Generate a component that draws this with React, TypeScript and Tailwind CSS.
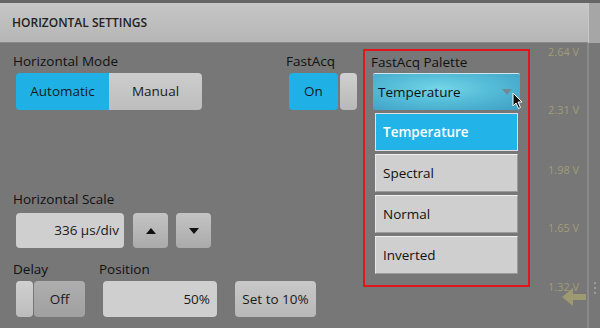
import React from "react";

const font = { fontFamily: '"Open Sans", "DejaVu Sans", sans-serif' };

function Btn({ children, className }: { children?: React.ReactNode; className: string }) {
  return (
    <div className={"flex items-center justify-center rounded-[4px] text-[13.5px] text-[#1a1a1a] " + className}>
      {children}
    </div>
  );
}

export default function App() {
  const volts = [
    { t: "2.64 V", y: 45 },
    { t: "2.31 V", y: 103 },
    { t: "1.98 V", y: 163 },
    { t: "1.65 V", y: 221 },
    { t: "1.32 V", y: 280 },
  ];
  return (
    <div className="relative w-[600px] h-[328px] overflow-hidden bg-[#777777]" style={font}>
      {/* title bar */}
      <div className="flex h-[43px] border-t-[3px] border-[#656565]">
        <div className="flex w-[588px] items-center border-b border-[#8a8a8a] bg-gradient-to-b from-[#c6c6c6] to-[#b6b6b6] pl-[12px] text-[12px] font-semibold text-[#222]">
          HORIZONTAL SETTINGS
        </div>
        <div className="flex-1 border-l border-[#c8c8c8] bg-[#a6a6a6]" />
      </div>

      <div className="flex h-[285px]">
        {/* left column */}
        <div className="w-[363px] pl-[13px] pt-[10px]">
          <div className="flex">
            <div className="w-[273px]">
              <div className="text-[13.5px] leading-[16px] text-[#111]">Horizontal Mode</div>
              <div className="ml-[3px] mt-[4px] flex h-[37px] w-[186px]">
                <Btn className="w-[93px] rounded-r-none bg-[#1fb1e6]">Automatic</Btn>
                <Btn className="w-[93px] rounded-l-none bg-gradient-to-b from-[#cdcdcd] to-[#bdbdbd]">Manual</Btn>
              </div>
            </div>
            <div>
              <div className="text-[13.5px] leading-[16px] text-[#111]">FastAcq</div>
              <div className="ml-[3px] mt-[4px] flex h-[37px] gap-[2px]">
                <Btn className="w-[49px] bg-[#1fb1e6]">On</Btn>
                <div className="w-[17px] rounded-[4px] bg-gradient-to-b from-[#d0d0d0] to-[#b8b8b8]" />
              </div>
            </div>
          </div>

          <div className="mt-[81px] text-[13.5px] leading-[16px] text-[#111]">Horizontal Scale</div>
          <div className="ml-[3px] mt-[6px] flex h-[35px]">
            <div className="flex w-[108px] items-center justify-end rounded-[4px] bg-[#cfcfcf] pr-[5px] text-[13.5px] text-[#1a1a1a]">
              336 μs/div
            </div>
            <Btn className="ml-[9px] w-[35px] bg-gradient-to-b from-[#c4c4c4] to-[#aaaaaa]">
              <svg width="10" height="6" viewBox="0 0 10 6"><path d="M0 6 L5 0 L10 6 Z" fill="#111" /></svg>
            </Btn>
            <Btn className="ml-[8px] w-[35px] bg-gradient-to-b from-[#c4c4c4] to-[#aaaaaa]">
              <svg width="10" height="6" viewBox="0 0 10 6"><path d="M0 0 L5 6 L10 0 Z" fill="#111" /></svg>
            </Btn>
          </div>

          <div className="mt-[13px] flex text-[13.5px] leading-[16px] text-[#111]">
            <div className="w-[86px]">Delay</div>
            <div>Position</div>
          </div>
          <div className="ml-[3px] mt-[4px] flex h-[36px]">
            <div className="w-[17px] rounded-[4px] bg-gradient-to-b from-[#d0d0d0] to-[#bcbcbc]" />
            <Btn className="ml-[1px] w-[51px] bg-gradient-to-b from-[#aeaeae] to-[#a0a0a0]">Off</Btn>
            <div className="ml-[18px] flex w-[114px] items-center justify-end rounded-[4px] bg-[#cfcfcf] pr-[7px] text-[13.5px] text-[#1a1a1a]">
              50%
            </div>
            <Btn className="ml-[18px] w-[81px] bg-gradient-to-b from-[#c8c8c8] to-[#b8b8b8]">Set to 10%</Btn>
          </div>
        </div>

        {/* palette box */}
        <div className="mt-[6px] h-[238px] w-[167px] border-2 border-[#e3141c] pt-[3px]">
          <div className="pl-[6px] text-[13.5px] leading-[16px] text-[#111]">FastAcq Palette</div>
          <div
            className="ml-[8px] mt-[3px] flex h-[37px] w-[147px] items-center justify-between rounded-[2px] border-t border-[#cde6ee] pl-[5px] pr-[8px] text-[13.5px] text-[#111]"
            style={{ background: "radial-gradient(ellipse at 45% 40%, #74d6e6 0%, #55bcd8 45%, #3d9fc4 100%)" }}
          >
            <span>Temperature</span>
            <svg width="10" height="6" viewBox="0 0 10 6"><path d="M0 0 L5 6 L10 0 Z" fill="#6f8a94" /></svg>
          </div>
          <div className="ml-[10px] mt-[3px] flex w-[143px] flex-col gap-[3px]">
            <div className="flex h-[38px] items-center border border-[#e0e0e0] bg-[#22b3e9] pl-[7px] text-[13.5px] font-semibold text-white">
              Temperature
            </div>
            {["Spectral", "Normal", "Inverted"].map((t) => (
              <div
                key={t}
                className="flex h-[38px] items-center border border-t-[#f0f0f0] border-l-[#e8e8e8] border-r-[#9a9a9a] border-b-[#9a9a9a] bg-[#cfcfcf] pl-[7px] text-[13.5px] text-[#111]"
              >
                {t}
              </div>
            ))}
          </div>
        </div>

        {/* right */}
        <div className="flex-1 flex">
          <div className="w-[57px]" />
          <div className="w-[2px] bg-[#8a8a8a]" />
          <div className="flex-1" />
        </div>
      </div>

      {/* overlays: scale labels */}
      {volts.map((v) => (
        <div
          key={v.t}
          className="absolute left-[548px] text-[11px] leading-[14px] text-[#a09d76]"
          style={{ top: v.y }}
        >
          {v.t}
        </div>
      ))}
      <svg className="absolute left-[562px] top-[287px]" width="24" height="20" viewBox="0 0 24 20">
        <path d="M0 10 L11 1 L11 7 L24 7 L24 13 L11 13 L11 19 Z" fill="#9d9a72" />
      </svg>
      <div className="absolute left-[594px] top-[282px] flex flex-col gap-[3px]">
        <div className="h-[2px] w-[2px] bg-[#999]" />
        <div className="h-[2px] w-[2px] bg-[#999]" />
        <div className="h-[2px] w-[2px] bg-[#999]" />
      </div>
      {/* mouse cursor */}
      <svg className="absolute left-[512px] top-[92px]" width="12" height="18" viewBox="0 0 12 18">
        <path d="M1 1 L1 14 L4 11 L6.5 16.5 L8.5 15.5 L6 10 L10 10 Z" fill="#111" stroke="#fff" strokeWidth="1" />
      </svg>
    </div>
  );
}
